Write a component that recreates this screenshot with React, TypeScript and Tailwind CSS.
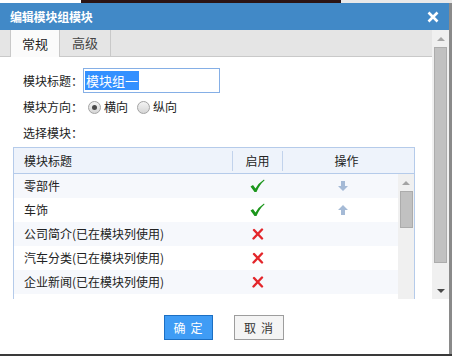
import React from 'react';

const rows = [
  { title: '零部件', on: true, op: 'down' },
  { title: '车饰', on: true, op: 'up' },
  { title: '公司简介(已在模块列使用)', on: false, op: '' },
  { title: '汽车分类(已在模块列使用)', on: false, op: '' },
  { title: '企业新闻(已在模块列使用)', on: false, op: '' },
];

const Check: React.FC = () => (
  <svg width="15" height="14" viewBox="0 0 15 14">
    <path d="M0.5 7.5 L3 6 L5.5 9.5 Q8.5 4 14 0.5 L14.5 1.5 Q9.5 5.5 6.5 13 L4.5 13 Z" fill="#1c961c" />
  </svg>
);

const Cross: React.FC = () => (
  <svg width="12" height="12" viewBox="0 0 12 12">
    <path d="M2 2 L10 10.5 M10 1.5 L1.5 10.5" stroke="#e3262b" strokeWidth="2.4" strokeLinecap="round" />
  </svg>
);

const Arrow: React.FC<{ dir: string }> = ({ dir }) => (
  <svg width="10" height="10" viewBox="0 0 10 10" className={dir === 'up' ? 'rotate-180' : ''}>
    <path d="M3 0 H7 V5 H10 L5 10 L0 5 H3 Z" fill="#a5bad6" />
  </svg>
);

const Radio: React.FC<{ checked?: boolean }> = ({ checked }) => (
  <span className="w-[13px] h-[13px] rounded-full border border-[#a3a3a3] bg-gradient-to-b from-[#f4f4f4] to-[#d6d6d6] flex items-center justify-center">
    {checked && <span className="w-[5px] h-[5px] rounded-full bg-[#4a4a4a]" />}
  </span>
);

const App: React.FC = () => {
  return (
    <div
      className="w-[452px] h-[356px] overflow-hidden bg-[#3a3a3a] text-[12px] text-[#222]"
      style={{ fontFamily: '"Noto Sans CJK SC", "Noto Sans", sans-serif' }}
    >
      <div className="h-[3px] flex">
        <div className="w-[81px] bg-white" />
        <div className="w-[260px] bg-[#2b1414]" />
        <div className="flex-1 bg-[#e9e9e9]" />
      </div>
      <div className="flex">
        <div className="w-[449px] h-[351px] bg-white flex flex-col">
          {/* title bar */}
          <div className="h-[27px] bg-[#4189c7] flex items-center justify-between pl-[10px] pr-[10px]">
            <span className="text-white font-bold text-[12px] leading-none tracking-[-0.2px]">编辑模块组模块</span>
            <svg width="12" height="12" viewBox="0 0 12 12">
              <path d="M1.5 1.5 L10.5 10.5 M10.5 1.5 L1.5 10.5" stroke="white" strokeWidth="2.6" />
            </svg>
          </div>

          <div className="flex h-[269px]">
            <div className="flex-1 flex flex-col overflow-hidden">
              {/* tabs */}
              <div className="h-[27px] bg-[#e5e5e5] border-b border-[#c9c9c9] flex items-end pl-[10px] shrink-0">
                <div className="w-[50px] h-[27px] bg-[#fbfbfb] border-l border-r border-[#c9c9c9] -mb-px flex items-center justify-center text-[13px] text-[#222]">
                  常规
                </div>
                <div className="w-[51px] h-[26px] border-r border-[#c9c9c9] flex items-center justify-center text-[13px] text-[#444]">
                  高级
                </div>
              </div>

              <div className="pl-[23px] pt-[11px] flex flex-col">
                <div className="flex items-center h-[25px]">
                  <span className="w-[60px]">模块标题：</span>
                  <div className="w-[137px] h-[25px] border border-[#85afe6] flex items-center pl-[1px]">
                    <span className="bg-[#3390ff] text-white text-[13px] leading-[19px] px-[1px]">模块组一</span>
                  </div>
                </div>
                <div className="flex items-center h-[26px] mt-[1px]">
                  <span className="w-[65px]">模块方向：</span>
                  <Radio checked />
                  <span className="ml-[3px]">横向</span>
                  <span className="ml-[9px]" />
                  <Radio />
                  <span className="ml-[3px]">纵向</span>
                </div>
                <div className="flex items-center h-[26px]">
                  <span>选择模块：</span>
                </div>
              </div>

              {/* table */}
              <div className="ml-[13px] mt-[1px] w-[402px] border-l border-r border-t border-[#b5cbea] flex flex-col flex-1 min-h-0">
                <div className="h-[26px] bg-[#eef3fb] border-b border-[#b5cbea] flex items-center shrink-0">
                  <div className="w-[218px] pl-[10px] flex items-center">模块标题</div>
                  <div className="w-[51px] h-[20px] border-l border-r border-[#c2d3ec] flex items-center justify-center">启用</div>
                  <div className="flex-1 flex items-center justify-center pr-[4px]">操作</div>
                </div>
                <div className="flex flex-1 min-h-0">
                  <div className="flex-1 flex flex-col overflow-hidden">
                    {rows.map((r, i) => (
                      <div
                        key={r.title}
                        className={`h-[24px] shrink-0 flex items-center ${i % 2 === 0 ? 'bg-[#f6f8fc]' : 'bg-white'}`}
                      >
                        <div className="w-[218px] pl-[10px]">{r.title}</div>
                        <div className="w-[51px] flex justify-center">{r.on ? <Check /> : <Cross />}</div>
                        <div className="flex-1 flex justify-center pl-[4px]">{r.op && <Arrow dir={r.op} />}</div>
                      </div>
                    ))}
                  </div>
                  <div className="w-[16px] bg-[#f0f0f0] flex flex-col items-center pt-[7px]">
                    <span className="w-0 h-0 border-l-[4px] border-r-[4px] border-b-[4px] border-l-transparent border-r-transparent border-b-[#a3a3a3]" />
                    <div className="mt-[6px] w-[13px] h-[37px] bg-[#c1c1c1] border border-[#acacac]" />
                  </div>
                </div>
              </div>
            </div>

            {/* outer scrollbar */}
            <div className="w-[17px] bg-[#f0f0f0] flex flex-col items-center pt-[7px] pb-[6px]">
              <span className="w-0 h-0 border-l-[4px] border-r-[4px] border-b-[4px] border-l-transparent border-r-transparent border-b-[#a6a6a6]" />
              <div className="mt-[6px] w-[13px] h-[216px] bg-[#c1c1c1] border border-[#acacac]" />
              <div className="flex-1" />
              <span className="w-0 h-0 border-l-[4px] border-r-[4px] border-t-[4px] border-l-transparent border-r-transparent border-t-[#4a4a4a]" />
            </div>
          </div>

          {/* footer */}
          <div className="flex-1 flex justify-center items-start pt-[16px] gap-[21px] pr-[2px]">
            <button className="w-[49px] h-[25px] bg-[#3f9cf5] border border-[#1c6fc3] text-white text-[12px] tracking-[5px] pl-[5px] flex items-center justify-center">
              确定
            </button>
            <button className="w-[50px] h-[25px] bg-[#f4f4f4] border border-[#9d9d9d] text-[#333] text-[12px] tracking-[5px] pl-[5px] flex items-center justify-center">
              取消
            </button>
          </div>
        </div>
        <div className="flex-1 h-[351px] bg-[#8a8a8a]" />
      </div>
    </div>
  );
};

export default App;
